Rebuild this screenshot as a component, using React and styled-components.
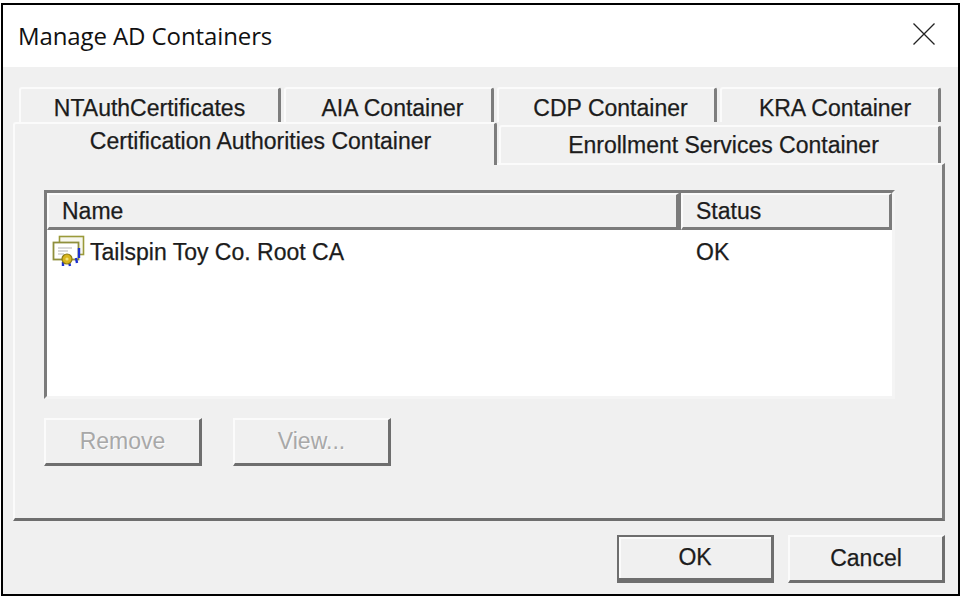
import styled, { createGlobalStyle } from "styled-components";

const GlobalStyle = createGlobalStyle`
  html, body {
    margin: 0;
    padding: 0;
    background: #fff;
    font-family: "Liberation Sans", Arial, sans-serif;
    color: #1c1c1c;
  }
`;

const Dialog = styled.div`
  box-sizing: border-box;
  width: 959px;
  height: 593px;
  margin: 3px 0 0 1px;
  border: 2px solid #000;
  background: #f0f0f0;
  display: flex;
  flex-direction: column;
`;

const TitleBar = styled.div`
  height: 62px;
  flex: none;
  background: #fff;
  display: flex;
  align-items: center;
  justify-content: space-between;
  padding: 0 23px 2px 15px;
  box-sizing: border-box;
`;

const Title = styled.div`
  font-family: "Open Sans", sans-serif;
  font-size: 24px;
  letter-spacing: -0.1px;
  color: #111;
`;

const CloseSvg = styled.svg`
  margin-bottom: 3px;
`;

const Body = styled.div`
  flex: 1;
  display: flex;
  flex-direction: column;
  padding: 20px 12px 0 10px;
`;

const TabRow = styled.div`
  display: flex;
  align-items: flex-end;
  padding: ${(p) => p.$pad || "0"};
  gap: ${(p) => p.$gap || "0"};
`;

const Tab = styled.div`
  box-sizing: border-box;
  width: ${(p) => p.$w}px;
  height: ${(p) => p.$h}px;
  padding-left: ${(p) => p.$shift || 0}px;
  background: #f0f0f0;
  border-top: 2px solid #fbfbfb;
  border-left: 2px solid #fbfbfb;
  border-right: 3px solid #7d7d7d;
  border-top-left-radius: 3px;
  border-top-right-radius: 3px;
  font-size: 23px;
  -webkit-text-stroke: 0.25px #1c1c1c;
  white-space: nowrap;
  text-align: center;
  line-height: ${(p) => p.$lh}px;
  position: relative;
  z-index: ${(p) => (p.$active ? 2 : 1)};
  margin-bottom: ${(p) => (p.$active ? "-2px" : "0")};
`;

const Panel = styled.div`
  box-sizing: border-box;
  width: 932px;
  height: 358px;
  border-top: 2px solid #fbfbfb;
  border-left: 2px solid #fbfbfb;
  border-right: 3px solid #7d7d7d;
  border-bottom: 3px solid #6e6e6e;
  padding: 25px 47px 0 29px;
  display: flex;
  flex-direction: column;
  gap: 19px;
`;

const ListBox = styled.div`
  box-sizing: border-box;
  height: 209px;
  background: #fff;
  border-top: 3px solid #7b7b7b;
  border-left: 3px solid #7b7b7b;
  border-right: 3px solid #f4f4f4;
  border-bottom: 3px solid #f4f4f4;
  display: flex;
  flex-direction: column;
`;

const HeaderRow = styled.div`
  display: flex;
  height: 37px;
  flex: none;
  background: #7b7b7b;
  gap: 2px;
`;

const HeaderCell = styled.div`
  box-sizing: border-box;
  width: ${(p) => p.$w}px;
  flex: ${(p) => (p.$grow ? 1 : "none")};
  background: #f0f0f0;
  border-top: 2px solid #fbfbfb;
  border-left: 2px solid #fbfbfb;
  border-right: 3px solid #7b7b7b;
  border-bottom: 3px solid #7b7b7b;
  padding-left: 13px;
  font-size: 23px;
  -webkit-text-stroke: 0.25px #1c1c1c;
  line-height: 33px;
`;

const Row = styled.div`
  display: flex;
  align-items: center;
  height: 44px;
  font-size: 23px;
  -webkit-text-stroke: 0.25px #1c1c1c;
`;

const NameCell = styled.div`
  width: 634px;
  flex: none;
  display: flex;
  align-items: center;
  padding-left: 5px;
  box-sizing: border-box;
  gap: 4px;
`;

const StatusCell = styled.div`
  padding-left: 15px;
`;

const CertSvg = styled.svg`
  margin-top: -2px;
`;

const ButtonRow = styled.div`
  display: flex;
  gap: 31px;
`;

const Button = styled.div`
  box-sizing: border-box;
  width: ${(p) => p.$w}px;
  height: 48px;
  background: #f0f0f0;
  border-top: 2px solid ${(p) => (p.$default ? "#6e6e6e" : "#fbfbfb")};
  border-left: 2px solid ${(p) => (p.$default ? "#6e6e6e" : "#fbfbfb")};
  border-right: 3px solid #6e6e6e;
  border-bottom: ${(p) => (p.$default ? "5px" : "3px")} solid #6e6e6e;
  box-shadow: ${(p) => (p.$default ? "inset 2px 2px 0 #fbfbfb" : "none")};
  display: flex;
  align-items: center;
  justify-content: center;
  font-size: 23px;
  color: ${(p) => (p.$disabled ? "#a8a8a8" : "#1c1c1c")};
  -webkit-text-stroke: ${(p) => (p.$disabled ? "0" : "0.25px #1c1c1c")};
  text-shadow: ${(p) => (p.$disabled ? "1px 1px 0 #fbfbfb" : "none")};
`;

const Footer = styled.div`
  display: flex;
  justify-content: flex-end;
  gap: 14px;
  width: 932px;
  padding-top: 14px;
`;

function CloseIcon() {
  return (
    <CloseSvg width="22" height="22" viewBox="0 0 22 22" fill="none" stroke="#222" strokeWidth="1.3">
      <path d="M0.5 0.5 L21.5 21.5 M21.5 0.5 L0.5 21.5" />
    </CloseSvg>
  );
}

function CertIcon() {
  return (
    <CertSvg width="34" height="34" viewBox="0 0 34 34" fill="none">
      <rect x="7.5" y="2.5" width="24" height="18" fill="#f7f7ef" stroke="#9a9a3a" strokeWidth="1.6" />
      <rect x="1.5" y="8.5" width="25" height="17" fill="#fff" stroke="#8f8f3c" strokeWidth="1.8" />
      <path d="M6 14 H20 M6 17 H16 M6 20 H12" stroke="#b4b4b4" strokeWidth="1.2" />
      <path d="M27 14 V24" stroke="#1c2fd0" strokeWidth="2.4" />
      <path d="M24 24 L25 29 M11 28 L11 32 M17 28 L18 32" stroke="#1c2fd0" strokeWidth="2.4" />
      <circle cx="15" cy="25" r="5" fill="#d8b51c" stroke="#8a7a14" strokeWidth="1.2" />
      <circle cx="15" cy="25" r="1.6" fill="#f3e27a" />
    </CertSvg>
  );
}

export default function App() {
  return (
    <>
      <GlobalStyle />
      <Dialog>
        <TitleBar>
          <Title>Manage AD Containers</Title>
          <CloseIcon />
        </TitleBar>
        <Body>
          <TabRow $pad="0 0 0 6px" $gap="3px">
            <Tab $w={262} $h={35} $lh={38}>NTAuthCertificates</Tab>
            <Tab $w={210} $h={35} $lh={38} $shift={8}>AIA Container</Tab>
            <Tab $w={220} $h={35} $lh={38} $shift={8}>CDP Container</Tab>
            <Tab $w={221} $h={35} $lh={38} $shift={10}>KRA Container</Tab>
          </TabRow>
          <TabRow $gap="2px">
            <Tab $w={484} $h={43} $lh={35} $shift={12} $active>Certification Authorities Container</Tab>
            <Tab $w={442} $h={38} $lh={36} $shift={8}>Enrollment Services Container</Tab>
          </TabRow>
          <Panel>
            <ListBox>
              <HeaderRow>
                <HeaderCell $w={632}>Name</HeaderCell>
                <HeaderCell $grow>Status</HeaderCell>
              </HeaderRow>
              <Row>
                <NameCell>
                  <CertIcon />
                  Tailspin Toy Co. Root CA
                </NameCell>
                <StatusCell>OK</StatusCell>
              </Row>
            </ListBox>
            <ButtonRow>
              <Button $w={158} $disabled>Remove</Button>
              <Button $w={158} $disabled>View...</Button>
            </ButtonRow>
          </Panel>
          <Footer>
            <Button $w={157} $default>OK</Button>
            <Button $w={157}>Cancel</Button>
          </Footer>
        </Body>
      </Dialog>
    </>
  );
}
